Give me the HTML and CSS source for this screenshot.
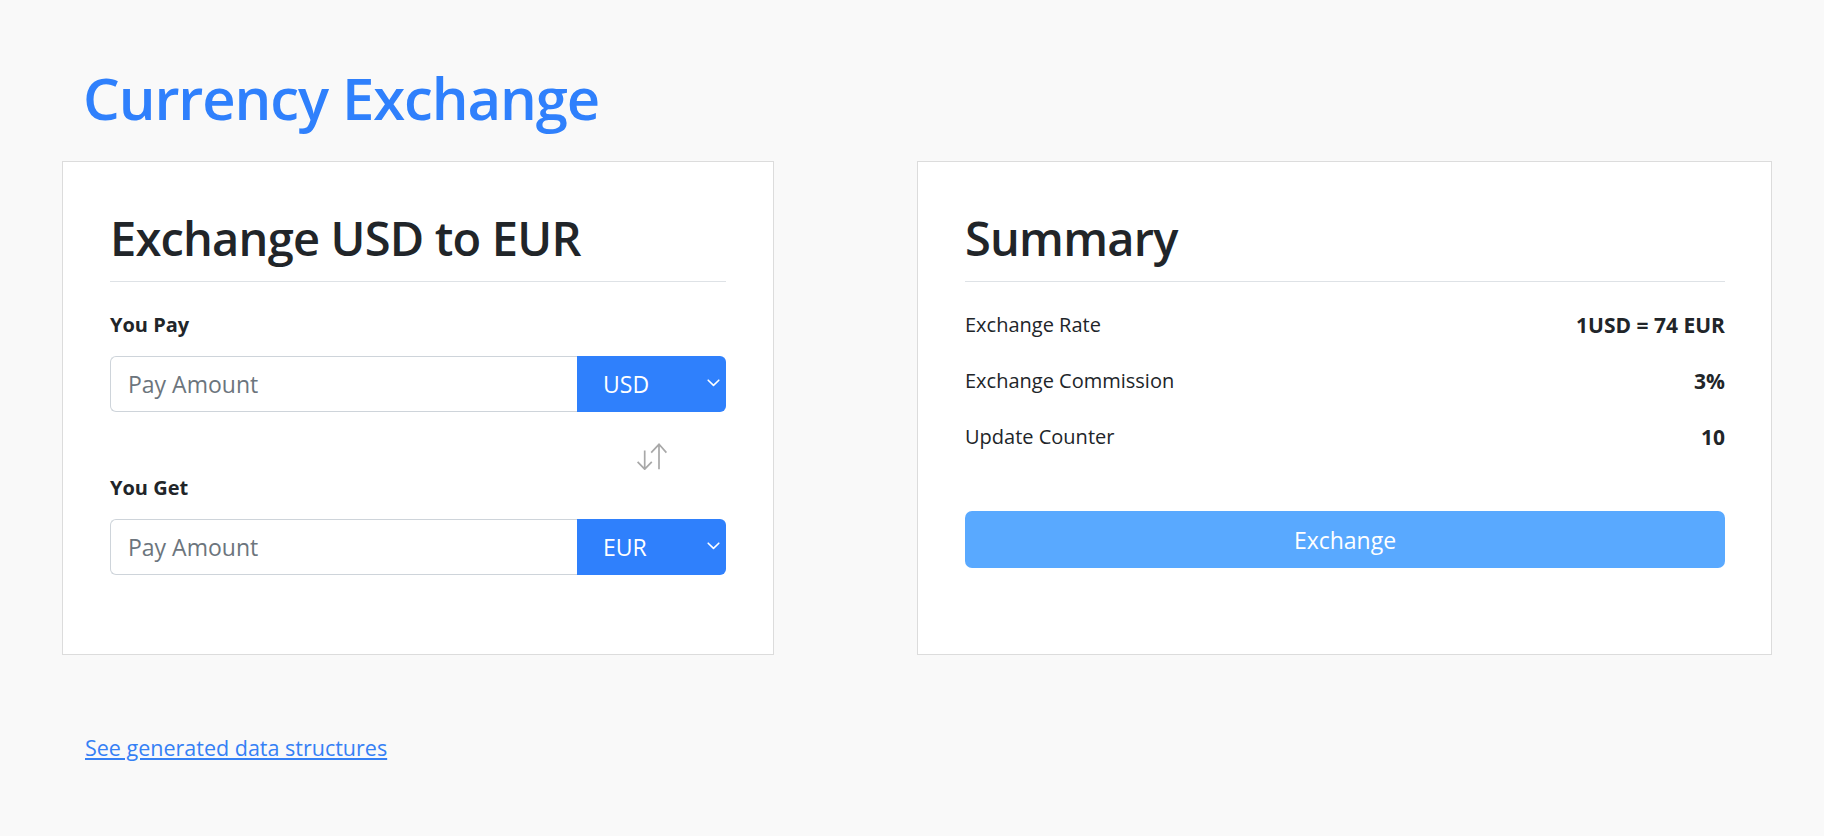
FILE: index.html
```html
<!DOCTYPE html>
<html lang="en">
<head>
<meta charset="utf-8">
<title>Currency Exchange</title>
<link rel="stylesheet" href="styles.css">
</head>
<body>
<main class="page">
  <h1 class="page-title">Currency Exchange</h1>
  <div class="cards">
    <section class="card card-exchange">
      <h2 class="card-title">Exchange USD to EUR</h2>
      <hr class="divider">
      <label class="field-label" for="pay">You Pay</label>
      <div class="input-group">
        <input id="pay" class="amount" type="text" placeholder="Pay Amount">
        <div class="currency">
          <select class="currency-select"><option>USD</option><option>EUR</option></select>
          <svg class="chevron" viewBox="0 0 13 8" width="13" height="8" fill="none" stroke="#fff" stroke-width="1.6" stroke-linecap="round" stroke-linejoin="round"><path d="M1.2 1.2L6.5 6.4L11.8 1.2"/></svg>
        </div>
      </div>
      <div class="swap-row">
        <span class="swap">
          <svg viewBox="0 0 30 27" width="30" height="27" fill="none" stroke="#a8a8a8" stroke-width="1.7"><path d="M7.7 7.5V26.2M0.6 18.8L7.7 26.2L14.8 18.8"/><path d="M22 1.3V26.3M14.2 9.6L22 1.3L29.4 9.6"/></svg>
        </span>
      </div>
      <label class="field-label field-label-tight" for="get">You Get</label>
      <div class="input-group">
        <input id="get" class="amount" type="text" placeholder="Pay Amount">
        <div class="currency">
          <select class="currency-select"><option>EUR</option><option>USD</option></select>
          <svg class="chevron" viewBox="0 0 13 8" width="13" height="8" fill="none" stroke="#fff" stroke-width="1.6" stroke-linecap="round" stroke-linejoin="round"><path d="M1.2 1.2L6.5 6.4L11.8 1.2"/></svg>
        </div>
      </div>
    </section>
    <section class="card card-summary">
      <h2 class="card-title">Summary</h2>
      <hr class="divider">
      <dl class="summary">
        <div class="summary-row"><dt>Exchange Rate</dt><dd>1USD = 74 EUR</dd></div>
        <div class="summary-row"><dt>Exchange Commission</dt><dd>3%</dd></div>
        <div class="summary-row"><dt>Update Counter</dt><dd>10</dd></div>
      </dl>
      <button class="exchange-btn" type="button">Exchange</button>
    </section>
  </div>
  <a class="data-link" href="#">See generated data structures</a>
</main>
</body>
</html>
```

FILE: styles.css
```css
* { box-sizing: border-box; }

html, body { margin: 0; }

body {
  background: #f9f9f9;
  font-family: "Open Sans", "Noto Sans", sans-serif;
  color: #212529;
}

.page {
  padding: 61px 52px 0 62px;
}

.page-title {
  margin: 0 0 26px 21px;
  font-size: 58px;
  line-height: 74px;
  font-weight: 600;
  color: #2f80fc;
  letter-spacing: -1.1px;
}

.cards {
  display: flex;
  gap: 143px;
  align-items: stretch;
}

.card {
  background: #fff;
  border: 1px solid #dcdcdc;
  padding: 47px 47px 79px 47px;
}

.card-exchange { width: 712px; }
.card-summary { width: 855px; padding-right: 46px; }

.card-title {
  margin: 0;
  font-size: 47px;
  line-height: 58px;
  font-weight: 600;
  letter-spacing: -0.8px;
}

.divider {
  margin: 14px 0 0;
  border: 0;
  border-top: 1px solid #dee2e6;
}

.field-label {
  display: block;
  margin-top: 28px;
  font-size: 20px;
  line-height: 30px;
  font-weight: 700;
}

.field-label-tight { margin-top: 3px; }

.input-group {
  display: flex;
  margin-top: 16px;
  height: 56px;
}

.amount {
  flex: 1;
  min-width: 0;
  border: 1px solid #ced4da;
  border-right: 0;
  border-radius: 6px 0 0 6px;
  padding: 0 17px;
  font-family: inherit;
  font-size: 23px;
  color: #212529;
  background: #fff;
  outline: none;
}

.amount::placeholder { color: #6c757d; opacity: 1; }

.currency {
  position: relative;
  width: 149px;
}

.currency-select {
  -webkit-appearance: none;
  appearance: none;
  width: 100%;
  height: 100%;
  border: 0;
  border-radius: 0 6px 6px 0;
  background: #2f80fc;
  color: #fff;
  font-family: inherit;
  font-size: 23px;
  padding: 0 0 0 26px;
  outline: none;
}

.chevron {
  position: absolute;
  right: 6px;
  top: 23px;
  pointer-events: none;
}

.swap-row {
  display: flex;
  justify-content: flex-end;
  margin-top: 31px;
}

.swap {
  width: 149px;
  display: flex;
  justify-content: center;
}

.swap svg { display: block; }

.summary {
  margin: 28px 0 0;
  display: flex;
  flex-direction: column;
  gap: 26px;
}

.summary-row {
  display: flex;
  justify-content: space-between;
  align-items: center;
  height: 30px;
  font-size: 20px;
  line-height: 30px;
}

.summary-row dt { font-weight: 400; }
.summary-row dd { margin: 0; font-weight: 700; font-size: 21px; line-height: 30px; }

.exchange-btn {
  display: block;
  width: 100%;
  margin-top: 59px;
  height: 57px;
  border: 0;
  border-radius: 7px;
  background: #59a9ff;
  color: #fff;
  font-family: inherit;
  font-size: 23px;
}

.data-link {
  display: inline-block;
  margin: 78px 0 0 23px;
  font-size: 21.5px;
  line-height: 30px;
  color: #3580f5;
  text-decoration: underline;
}
```
